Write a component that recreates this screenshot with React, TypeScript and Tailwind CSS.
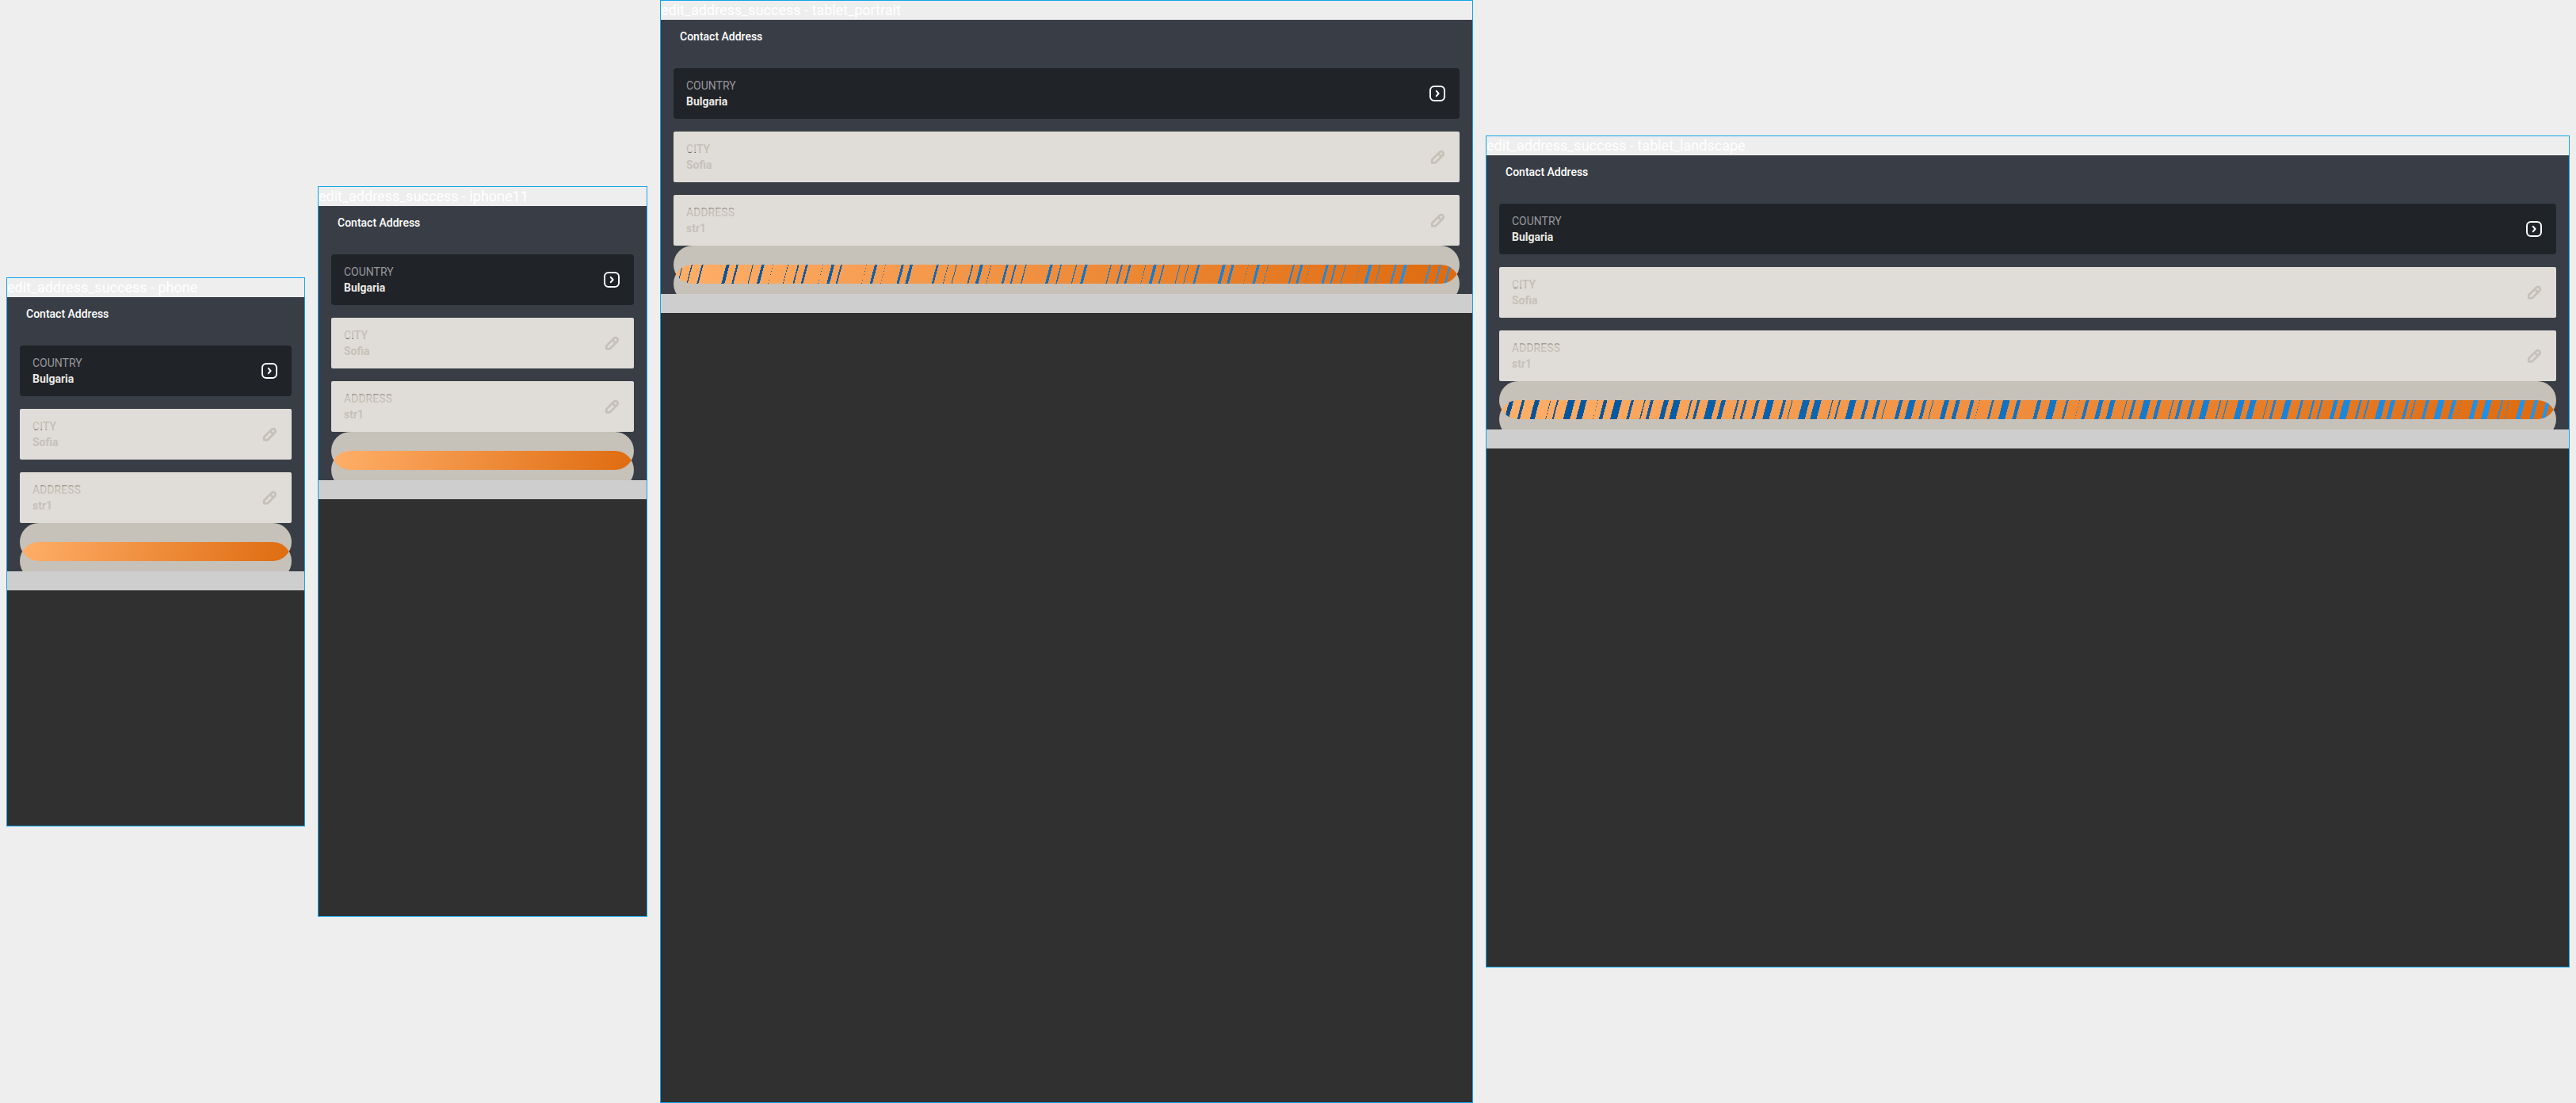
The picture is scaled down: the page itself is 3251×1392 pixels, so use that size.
import { useId } from "react";

type Mark = [position: number, thickness: number];

const shift = (offset: number, marks: Mark[]): Mark[] =>
  marks.map(([x, w]) => [x + offset, w]);

// Positions and thicknesses of the slanted bands, in thirds of a pixel.
const portraitBands: Mark[] = [
  ...shift(-90, [
    [125, 3], [160, 4], [200, 6], [296, 12], [332, 7], [391, 3], [429, 10], [466, 1], [524, 2],
    [563, 5], [595, 8], [655, 1], [694, 11], [726, 6], [820, 1], [857, 10], [893, 1], [958, 9],
    [991, 11], [1090, 8], [1130, 2], [1162, 3], [1223, 5], [1257, 11], [1293, 2], [1354, 8],
    [1386, 6], [1425, 4], [1521, 10], [1558, 5],
  ]),
  ...shift(1470, [
    [93, 10], [187, 4], [228, 6], [259, 7], [318, 2], [354, 11], [387, 5], [448, 3],
    [480, 3], [519, 8], [615, 11], [648, 9], [708, 1], [745, 10], [782, 2], [879, 6], [909, 9],
    [942, 1], [1006, 9], [1037, 6], [1075, 3], [1130, 1], [1169, 11], [1206, 3], [1265, 7],
    [1302, 11], [1395, 6], [1434, 5], [1471, 7],
  ]),
  [1526, 4],
];

const landscapeBands: Mark[] = [
  ...shift(-96, [
    [143, 16], [188, 10], [240, 18], [291, 2], [318, 6], [370, 26], [417, 22], [469, 1], [499, 13],
    [548, 26], [601, 10], [648, 4], [675, 11], [729, 18], [770, 25], [824, 6], [852, 10], [903, 29],
    [946, 16], [1001, 7], [1030, 9], [1076, 12], [1124, 25], [1177, 11], [1206, 3], [1259, 26],
    [1304, 25], [1359, 4], [1386, 6], [1436, 24],
  ]),
  ...shift(1344, [
    [49, 12], [93, 12], [123, 3], [178, 14], [221, 24], [269, 12], [300, 3], [351, 18], [394, 15],
    [448, 13], [477, 1], [526, 8], [577, 25], [624, 14], [702, 14], [755, 25], [808, 8], [854, 1],
    [884, 12], [936, 16], [980, 18], [1033, 3], [1062, 10], [1110, 25], [1156, 14], [1209, 4],
    [1238, 12], [1284, 12], [1335, 23],
  ]),
  ...shift(2694, [
    [38, 5], [64, 4], [117, 23], [162, 22], [216, 3], [244, 9], [295, 22], [347, 9], [391, 7],
    [422, 7], [475, 15], [517, 26], [568, 8], [598, 6], [651, 22], [691, 16], [747, 10], [775, 5],
    [822, 11], [874, 23], [923, 14], [951, 1], [1004, 17], [1053, 22], [1105, 6], [1131, 2],
    [1182, 17], [1233, 13], [1278, 14],
  ]),
];

type Device = { name: string; aspect: string; span: number; bands: Mark[] };

const devices: Device[] = [
  { name: "phone", aspect: "aspect-[375/667]", span: 1029, bands: [] },
  { name: "iphone11", aspect: "aspect-[414/896]", span: 1146, bands: [] },
  { name: "tablet_portrait", aspect: "aspect-[1024/1366]", span: 2976, bands: portraitBands },
  { name: "tablet_landscape", aspect: "aspect-[1366/1024]", span: 4002, bands: landscapeBands },
];

function ChevronIcon() {
  return (
    <svg viewBox="0 0 24 24" fill="none" className="size-6 shrink-0" aria-hidden="true">
      <rect x="3" y="3" width="18" height="18" rx="5" stroke="white" strokeWidth="2" />
      <path d="M10.8 8.8 13.6 12l-2.8 3.2" stroke="white" strokeWidth="2" strokeLinecap="round" strokeLinejoin="round" />
    </svg>
  );
}

function PencilIcon() {
  return (
    <svg viewBox="0 0 24 24" fill="none" className="size-6 shrink-0" aria-hidden="true">
      <path
        d="M5.3 19.4v-4L14.8 6c1.1-1 3.1-1 4.1 0 1 1 1 2.9 0 4L9.4 19.4zM12.8 7.8l4.2 4.2"
        stroke="#c6c1b8"
        strokeWidth="2.8"
        strokeLinejoin="round"
      />
    </svg>
  );
}

function Bands({ span, bands }: { span: number; bands: Mark[] }) {
  const id = useId();
  return (
    <svg viewBox={`0 0 ${span} 72`} preserveAspectRatio="none" className="h-6 w-full" aria-hidden="true" shapeRendering="crispEdges">
      <defs>
        <linearGradient id={id} gradientUnits="userSpaceOnUse" x1="0" y1="0" x2={span} y2="0">
          <stop offset="0" stopColor="#005198" />
          <stop offset="1" stopColor="#2195f1" />
        </linearGradient>
      </defs>
      {bands.map(([x, w]) =>
        w > 1 ? (
          <path key={x} d={`M${x - w / 2} 0h${w}l-19 72h${-w}z`} fill={`url(#${id})`} />
        ) : (
          <path key={x} d={`M${x} 0l-19 72`} stroke={`url(#${id})`} strokeWidth="3" strokeDasharray="3 9" />
        ),
      )}
    </svg>
  );
}

function SaveButton({ span, bands }: { span: number; bands: Mark[] }) {
  return (
    <button type="button" aria-label="Save" className="grid h-[61px] w-full overflow-hidden">
      <span className="col-start-1 row-start-1 mt-6 h-12 rounded-full bg-[#c6c1b9]" />
      <span className="col-start-1 row-start-1 h-12 rounded-full bg-[#c6c1b9]" />
      <span className="col-start-1 row-start-1 h-12 overflow-hidden rounded-full">
        <span className="mt-6 block h-12 overflow-hidden rounded-full bg-[linear-gradient(105deg,#ffaf69,#de6a0e)]">
          {bands.length > 0 && <Bands span={span} bands={bands} />}
        </span>
      </span>
    </button>
  );
}

function Field({ label, value, tint }: { label: string; value: string; tint: string }) {
  const id = useId();
  return (
    <div className="flex items-center gap-4 rounded-[2px] bg-[#e0ddd8] px-4 py-3 text-sm leading-5 font-medium text-[#c6c1b8]">
      <div className="flex min-w-0 flex-1 flex-col">
        <label htmlFor={id} className={`self-start bg-clip-text text-transparent ${tint}`}>
          {label}
        </label>
        <input id={id} defaultValue={value} className="h-5 w-full bg-transparent font-bold outline-none" />
      </div>
      <PencilIcon />
    </div>
  );
}

function Frame({ device }: { device: Device }) {
  return (
    <section className="border border-[#10a5ec]">
      <h2 className="h-6 overflow-hidden text-lg leading-6 font-normal whitespace-nowrap text-white">
        edit_address_success - {device.name}
      </h2>
      <div className={`bg-[#303030] ${device.aspect}`}>
        <form className="bg-[#393e46]" onSubmit={(event) => event.preventDefault()}>
          <h3 className="h-[61px] px-6 pt-[11px] text-sm leading-5 font-medium text-white">Contact Address</h3>
          <div className="px-4">
            <div className="flex flex-col gap-4">
              <button type="button" className="flex items-center justify-between rounded bg-[#202328] px-4 py-3 text-left text-sm leading-5">
                <span className="flex flex-col">
                  <span className="text-[#96989b]">COUNTRY</span>
                  <span className="font-bold text-[#eae8e4]">Bulgaria</span>
                </span>
                <ChevronIcon />
              </button>
              <Field
                label="CITY"
                value="Sofia"
                tint="bg-[linear-gradient(90deg,transparent_13px,#c6c1b8_13px),linear-gradient(#c6c1b8_14px,#6e655c_14px)]"
              />
              <Field label="ADDRESS" value="str1" tint="bg-[linear-gradient(#a39c93_6px,#c6c1b8_6px)]" />
            </div>
            <SaveButton span={device.span} bands={device.bands} />
          </div>
        </form>
        <div className="h-6 bg-[#cecece]" />
      </div>
    </section>
  );
}

export default function App() {
  return (
    <main className="grid min-h-screen grid-cols-[377fr_416fr_1026fr_1368fr] items-center gap-4 bg-[#eeeeee] px-2 font-[Roboto,sans-serif]">
      {devices.map((device) => (
        <Frame key={device.name} device={device} />
      ))}
    </main>
  );
}
